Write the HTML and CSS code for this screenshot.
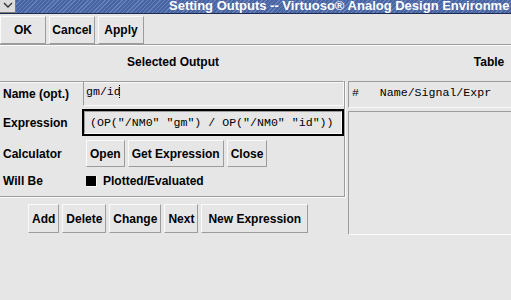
FILE: index.html
```html
<!DOCTYPE html>
<html lang="en">
  <head>
    <meta charset="UTF-8" />
    <meta name="viewport" content="width=device-width, initial-scale=1.0" />
    <title>Setting Outputs</title>
    <link rel="stylesheet" href="styles.css">
  </head>
  <body>
    <div class="window">
      <div class="titlebar">
        <span class="menu-btn">
          <svg width="10" height="7" viewBox="0 0 10 7"><path d="M1 1 L5 5 L9 1" fill="none" stroke="#333" stroke-width="1.4" /></svg>
        </span>
        <span class="title">Setting Outputs -- Virtuoso® Analog Design Environme</span>
      </div>

      <div class="toolbar">
        <a href="javascript:void(0)" class="btn btn-wide">OK</a>
        <a href="javascript:void(0)" class="btn btn-wide">Cancel</a>
        <a href="javascript:void(0)" class="btn btn-wide">Apply</a>
      </div>

      <div class="main">
        <div class="left">
          <div class="section-title">Selected Output</div>
          <div class="frame">
            <div class="row row-name">
              <span class="label">Name (opt.)</span>
              <div class="field name-field">gm/id<span class="cursor"></span></div>
            </div>
            <div class="row row-expr">
              <span class="label">Expression</span>
              <div class="focus-ring">
                <div class="field expr-field">(OP("/NM0" "gm") / OP("/NM0" "id"))</div>
              </div>
            </div>
            <div class="row row-calc">
              <span class="label">Calculator</span>
              <div class="btn-group">
                <a href="javascript:void(0)" class="btn">Open</a>
                <a href="javascript:void(0)" class="btn">Get Expression</a>
                <a href="javascript:void(0)" class="btn">Close</a>
              </div>
            </div>
            <div class="row row-will">
              <span class="label">Will Be</span>
              <div class="check">
                <span class="check-box"></span>
                <span class="check-text">Plotted/Evaluated</span>
              </div>
            </div>
          </div>
          <div class="actions">
            <a href="javascript:void(0)" class="btn">Add</a>
            <a href="javascript:void(0)" class="btn">Delete</a>
            <a href="javascript:void(0)" class="btn">Change</a>
            <a href="javascript:void(0)" class="btn">Next</a>
            <a href="javascript:void(0)" class="btn btn-long">New Expression</a>
          </div>
        </div>

        <div class="right">
          <div class="section-title">Table</div>
          <div class="table-head">#   Name/Signal/Expr</div>
          <div class="table-body"></div>
        </div>
      </div>
    </div>
  </body>
</html>
```

FILE: styles.css
```css
body {
  margin: 0;
  background-color: #e6e6e6;
  font-family: "Liberation Sans", Arial, sans-serif;
  font-size: 12px;
  font-weight: bold;
  color: #000;
  overflow: hidden;
}
.window {
  width: 511px;
  height: 300px;
  overflow: hidden;
}

/* title bar */
.titlebar {
  height: 13px;
  border-bottom: 1px solid #1c2a4d;
  background: repeating-linear-gradient(135deg, #4864a2 0 2px, #6680ba 2px 3px);
  display: flex;
  align-items: center;
  white-space: nowrap;
  overflow: hidden;
}
.menu-btn {
  width: 15px;
  height: 12px;
  margin-top: -1px;
  background-color: #dcdcdc;
  border-right: 1px solid #7a7a7a;
  border-bottom: 1px solid #7a7a7a;
  display: flex;
  align-items: center;
  justify-content: center;
  flex: none;
}
.title {
  margin-left: 153px;
  color: #fff;
  font-size: 13px;
  line-height: 13px;
  margin-top: -2px;
}

/* buttons */
.btn {
  display: flex;
  align-items: center;
  justify-content: center;
  height: 26px;
  padding: 0 3px;
  background-color: #e6e6e6;
  border: 1px solid;
  border-color: #fafafa #9c9c9c #9c9c9c #fafafa;
  color: #000;
  text-decoration: none;
  white-space: nowrap;
}

.toolbar {
  height: 31px;
  padding-top: 2px;
  box-sizing: border-box;
  display: flex;
  gap: 3px;
  border-bottom: 1px solid #9c9c9c;
  box-shadow: 0 1px 0 #fafafa;
}
.toolbar .btn {
  height: 26px;
  padding: 0 2px;
  min-width: 40px;
}

/* main */
.main {
  display: flex;
  gap: 2px;
  margin-top: 1px;
}
.left {
  width: 346px;
  flex: none;
}
.right {
  width: 282px;
  flex: none;
}
.section-title {
  height: 35px;
  line-height: 32px;
  text-align: center;
}

.frame {
  margin-left: -2px;
  width: 347px;
  height: 116px;
  box-sizing: border-box;
  border: 1px solid #9c9c9c;
  box-shadow: 1px 1px 0 #fafafa, inset 1px 1px 0 #fafafa;
  padding-left: 4px;
}
.row {
  display: flex;
  align-items: center;
}
.label {
  width: 80px;
  flex: none;
}
.row-name {
  height: 25px;
  margin-top: -1px;
}
.row-expr {
  height: 27px;
  margin-top: 3px;
}
.row-calc {
  height: 27px;
  margin-top: 4px;
}
.row-will {
  height: 20px;
  margin-top: 4px;
}

.field {
  box-sizing: border-box;
  font-family: "Liberation Mono", "Courier New", monospace;
  font-weight: normal;
  font-size: 11.6px;
  white-space: pre;
  border: 1px solid;
  border-color: #9c9c9c #fafafa #fafafa #9c9c9c;
  display: flex;
  align-items: center;
}
.name-field {
  width: 261px;
  height: 25px;
  padding-left: 2px;
  padding-bottom: 4px;
}
.cursor {
  display: inline-block;
  width: 1px;
  height: 13px;
  margin-left: -2px;
  border-left: 1px dotted #000;
}
.focus-ring {
  margin-left: -1px;
  width: 264px;
  height: 27px;
  box-sizing: border-box;
  border: 2px solid #000;
}
.expr-field {
  width: 100%;
  height: 100%;
  padding-left: 5px;
}

.btn-group {
  display: flex;
  gap: 3px;
  margin-left: 3px;
}
.btn-group .btn {
  height: 25px;
  padding: 0 3px;
}

.check {
  display: flex;
  align-items: center;
  margin-left: 3px;
}
.check-box {
  width: 10px;
  height: 10px;
  background-color: #000;
  border-right: 1px solid #fafafa;
  border-bottom: 1px solid #fafafa;
  margin-right: 6px;
}

.actions {
  display: flex;
  gap: 3px;
  padding-left: 28px;
  margin-top: 7px;
}
.actions .btn {
  height: 27px;
  padding: 0 3px;
}
.actions .btn-long {
  padding: 0 6px;
}

/* table */
.table-head {
  height: 27px;
  box-sizing: border-box;
  border: 1px solid;
  border-color: #9c9c9c #fafafa #fafafa #9c9c9c;
  font-family: "Liberation Mono", "Courier New", monospace;
  font-weight: normal;
  font-size: 11.6px;
  white-space: pre;
  padding: 4px 0 0 3px;
}
.table-body {
  height: 124px;
  margin-top: 3px;
  box-sizing: border-box;
  border: 1px solid;
  border-color: #9c9c9c #fafafa #fafafa #9c9c9c;
}
```
